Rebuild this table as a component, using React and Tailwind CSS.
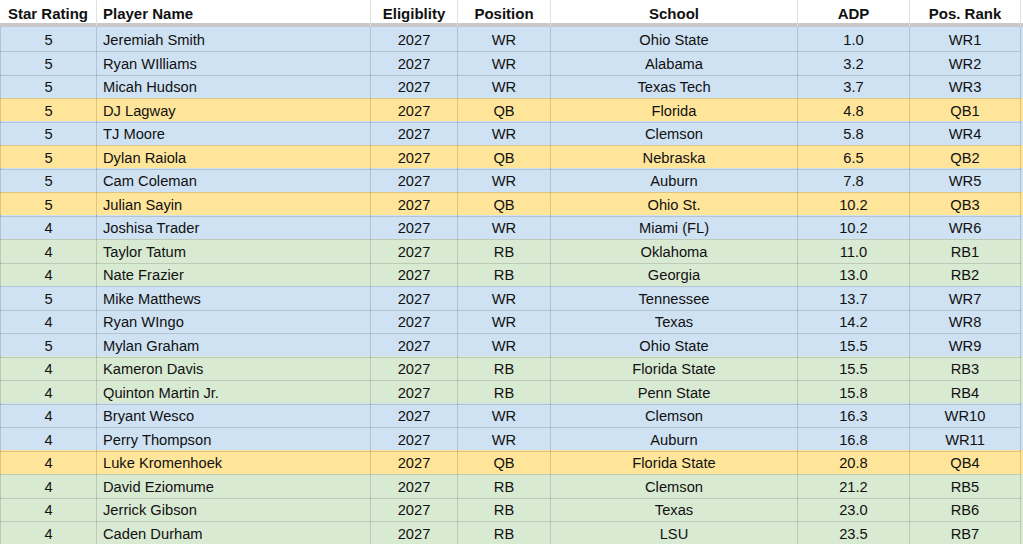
import React from "react";

const rows = [
  ["5", "Jeremiah Smith", "WR", "Ohio State", "1.0", "WR1"],
  ["5", "Ryan WIlliams", "WR", "Alabama", "3.2", "WR2"],
  ["5", "Micah Hudson", "WR", "Texas Tech", "3.7", "WR3"],
  ["5", "DJ Lagway", "QB", "Florida", "4.8", "QB1"],
  ["5", "TJ Moore", "WR", "Clemson", "5.8", "WR4"],
  ["5", "Dylan Raiola", "QB", "Nebraska", "6.5", "QB2"],
  ["5", "Cam Coleman", "WR", "Auburn", "7.8", "WR5"],
  ["5", "Julian Sayin", "QB", "Ohio St.", "10.2", "QB3"],
  ["4", "Joshisa Trader", "WR", "Miami (FL)", "10.2", "WR6"],
  ["4", "Taylor Tatum", "RB", "Oklahoma", "11.0", "RB1"],
  ["4", "Nate Frazier", "RB", "Georgia", "13.0", "RB2"],
  ["5", "Mike Matthews", "WR", "Tennessee", "13.7", "WR7"],
  ["4", "Ryan WIngo", "WR", "Texas", "14.2", "WR8"],
  ["5", "Mylan Graham", "WR", "Ohio State", "15.5", "WR9"],
  ["4", "Kameron Davis", "RB", "Florida State", "15.5", "RB3"],
  ["4", "Quinton Martin Jr.", "RB", "Penn State", "15.8", "RB4"],
  ["4", "Bryant Wesco", "WR", "Clemson", "16.3", "WR10"],
  ["4", "Perry Thompson", "WR", "Auburn", "16.8", "WR11"],
  ["4", "Luke Kromenhoek", "QB", "Florida State", "20.8", "QB4"],
  ["4", "David Eziomume", "RB", "Clemson", "21.2", "RB5"],
  ["4", "Jerrick Gibson", "RB", "Texas", "23.0", "RB6"],
  ["4", "Caden Durham", "RB", "LSU", "23.5", "RB7"],
];

const bg = {
  WR: "bg-[#cfe2f3]",
  QB: "bg-[#ffe599]",
  RB: "bg-[#d9ead3]",
};

const cols = "grid grid-cols-[97px_274px_87px_93px_247px_112px_111px]";

function Cell({ children, left, className = "" }) {
  return (
    <div
      className={`flex items-center pt-[2px] border-r border-b border-[#00000022] ${
        left ? "justify-start pl-[6px]" : "justify-center"
      } ${className}`}
    >
      {children}
    </div>
  );
}

export default function App() {
  return (
    <div
      className="w-[1023px] h-[544px] overflow-hidden bg-white text-[#111] text-[14.7px]"
      style={{ fontFamily: '"Liberation Sans", Arial, sans-serif' }}
    >
      <div className={`${cols} h-[27px] border-b-[4px] border-[#c8c8c8] font-bold text-[15px]`}>
        {["Star Rating", "Player Name", "Eligiblity", "Position", "School", "ADP", "Pos. Rank"].map(
          (h, i) => (
            <div
              key={h}
              className={`flex items-center pt-[3px] border-r border-[#e2e2e2] ${
                i === 1 ? "justify-start pl-[6px]" : "justify-center"
              }`}
            >
              {h}
            </div>
          )
        )}
      </div>
      {rows.map((r) => (
        <div key={r[1]} className={`${cols} h-[23.5px] ${bg[r[2]]}`}>
          <Cell className="border-l">{r[0]}</Cell>
          <Cell left>{r[1]}</Cell>
          <Cell>2027</Cell>
          <Cell>{r[2]}</Cell>
          <Cell>{r[3]}</Cell>
          <Cell>{r[4]}</Cell>
          <Cell>{r[5]}</Cell>
        </div>
      ))}
    </div>
  );
}
